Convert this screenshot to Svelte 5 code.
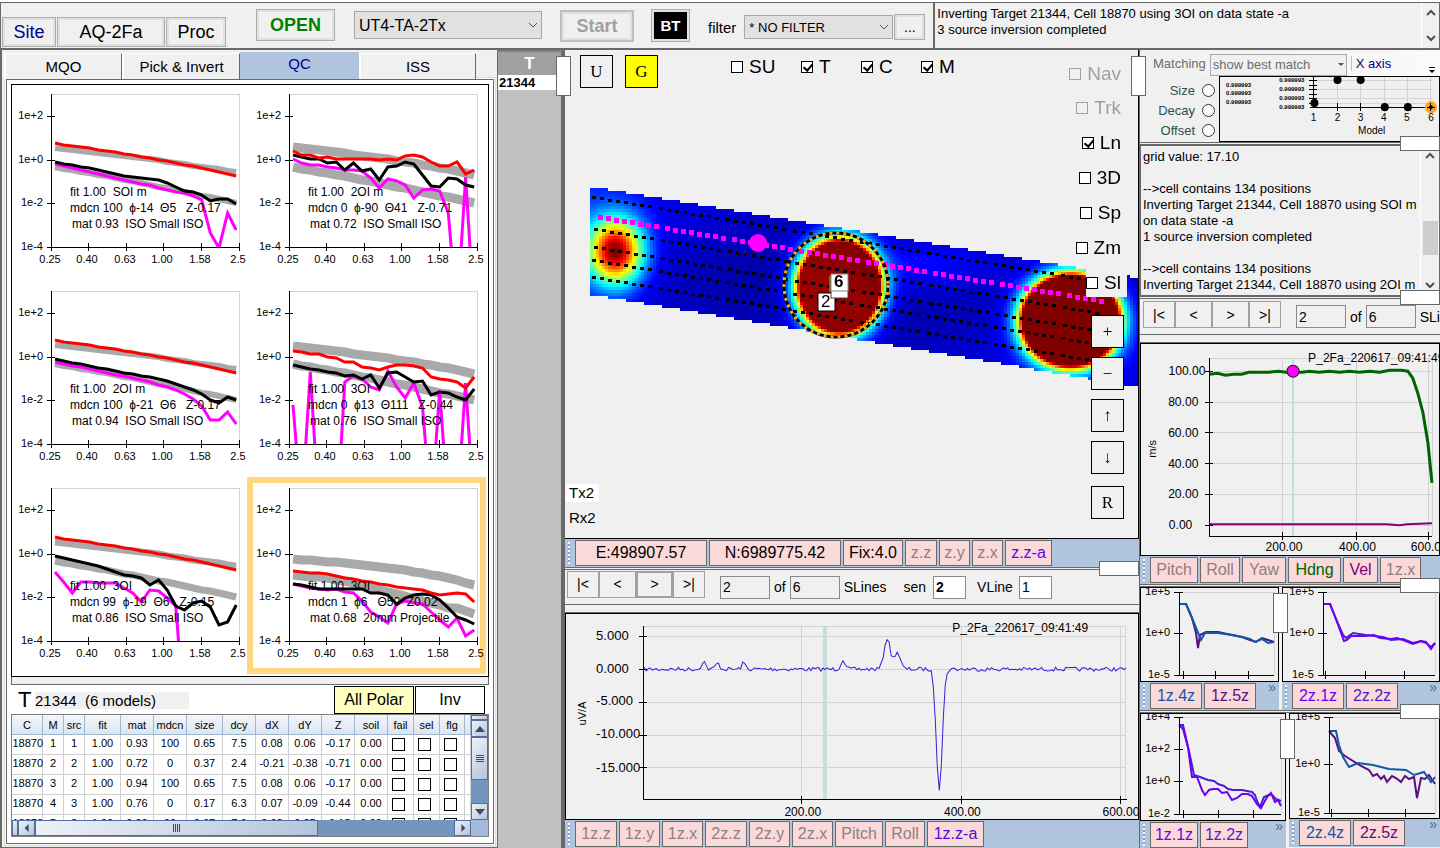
<script lang="ts">
  type Chip = { text: string; color?: string; width: number };
  type Decay = {
    label: string[];
    red: number[];
    black: number[];
    pink: number[];
    upper: number[];
    lower: number[];
    band: number;
  };

  let tab = $state("QC");
  let selected = $state(5);
  let heat: HTMLCanvasElement;

  const tabs = ["MQO", "Pick & Invert", "QC", "ISS"];

  const upperA = [63, 64, 65, 66, 67, 68, 69, 70, 71, 72, 73, 74, 75, 77, 78, 79, 81, 82, 83, 84, 86, 87];
  const lowerA = [82, 84, 85, 87, 88, 90, 91, 93, 95, 96, 98, 100, 102, 103, 105, 107, 109, 111, 112, 114, 116, 118];
  const upperB = [62, 63, 64, 65, 66, 67, 68, 70, 71, 72, 73, 74, 76, 77, 78, 80, 81, 83, 84, 86, 88, 90];
  const redA = [58, 60, 61, 62, 63, 65, 66, 67, 69, 70, 72, 73, 75, 76, 78, 80, 81, 83, 85, 87, 89, 91];

  const plots: Decay[] = [
    {
      label: ["fit 1.00  SOI m", "mdcn 100  ϕ-14  Θ5   Z-0.17", "mat 0.93  ISO Small ISO"],
      red: redA,
      black: [77, 79, 80, 82, 83, 85, 87, 89, 91, 92, 93, 94, 95, 98, 102, 106, 107, 110, 116, 114, 114, 119],
      pink: [79, 81, 83, 85, 87, 89, 91, 93, 95, 97, 99, 100, 103, 105, 107, 108, 111, 115, 148, 163, 128, 145],
      upper: upperA,
      lower: lowerA,
      band: 6
    },
    {
      label: ["fit 1.00  2OI m", "mdcn 0  ϕ-90  Θ41   Z-0.71", "mat 0.72  ISO Small ISO"],
      red: [66, 70, 70, 73, 72, 74, 74, 74, 74, 74, 75, 74, 75, 71, 70, 72, 77, 81, 81, 77, 89, 85],
      black: [70, 72, 74, 74, 78, 77, 85, 78, 86, 84, 95, 82, 81, 77, 79, 90, 101, 102, 93, 94, 100, 102],
      pink: [74, 78, 80, 80, 82, 83, 85, 85, 86, 93, 103, 94, 96, 100, 113, 105, 104, 106, 128, 230, 92, 230],
      upper: upperB,
      lower: lowerA,
      band: 9
    },
    {
      label: ["fit 1.00  2OI m", "mdcn 100  ϕ-21  Θ6   Z-0.17", "mat 0.94  ISO Small ISO"],
      red: redA,
      black: [77, 79, 81, 82, 84, 86, 87, 89, 91, 92, 94, 95, 97, 99, 102, 105, 108, 112, 118, 121, 115, 118],
      pink: [80, 82, 84, 85, 87, 89, 91, 93, 94, 96, 98, 100, 103, 105, 108, 112, 117, 124, 138, 138, 130, 142],
      upper: upperA,
      lower: lowerA,
      band: 6
    },
    {
      label: ["fit 1.00  3OI", "mdcn 0  ϕ13  Θ111   Z-0.44", "mat 0.76  ISO Small ISO"],
      red: [69, 70, 72, 72, 75, 76, 80, 80, 85, 86, 88, 85, 83, 83, 84, 86, 95, 97, 98, 100, 106, 95],
      black: [83, 85, 87, 88, 90, 91, 94, 93, 97, 93, 106, 91, 90, 95, 100, 99, 113, 110, 111, 115, 118, 107],
      pink: [123, 228, 90, 228, 228, 248, 100, 94, 97, 105, 108, 89, 105, 116, 101, 125, 230, 108, 230, 230, 101, 230],
      upper: upperB.map((y) => y + 2),
      lower: lowerA,
      band: 9
    },
    {
      label: ["fit 1.00  3OI", "mdcn 99  ϕ-19  Θ6   Z-0.15", "mat 0.86  ISO Small ISO"],
      red: redA,
      black: [77, 79, 81, 83, 85, 87, 90, 93, 96, 97, 99, 106, 101, 111, 127, 131, 124, 122, 128, 146, 143, 126],
      pink: [93, 103, 114, 103, 103, 104, 104, 104, 109, 114, 123, 111, 112, 119, 127, 240],
      upper: upperA,
      lower: lowerA,
      band: 7
    },
    {
      label: ["fit 1.00  3OI", "mdcn 1  ϕ6   Θ50  Z0.02", "mat 0.68  20mm Projectile"],
      red: [92, 93, 94, 94, 95, 97, 99, 100, 102, 103, 105, 106, 108, 109, 110, 111, 114, 116, 115, 114, 115, 123],
      black: [105, 106, 108, 110, 110, 110, 110, 110, 110, 114, 114, 116, 125, 119, 116, 115, 116, 121, 129, 138, 141, 145],
      pink: [105, 107, 109, 110, 111, 110, 113, 114, 122, 133, 138, 144, 125, 122, 124, 125, 133, 141, 148, 139, 157, 151],
      upper: [80, 81, 81, 82, 83, 83, 84, 85, 86, 87, 88, 89, 90, 91, 93, 94, 96, 97, 99, 101, 104, 106],
      lower: [96, 97, 98, 98, 99, 101, 102, 104, 106, 109, 111, 113, 115, 117, 120, 122, 124, 126, 129, 129, 132, 135],
      band: 9
    }
  ];

  const decayY = [["1e+2", 31], ["1e+0", 75], ["1e-2", 118], ["1e-4", 162]] as const;
  const decayX = [["0.25", 39], ["0.40", 76], ["0.63", 114], ["1.00", 151], ["1.58", 189], ["2.5", 227]] as const;

  const line = (ys: number[]) => ys.map((y, i) => `${(43 + i * 8.63).toFixed(1)},${y}`).join(" ");

  const columns = [
    ["C", 31], ["M", 21], ["src", 21], ["fit", 36], ["mat", 33], ["mdcn", 33], ["size", 36], ["dcy", 33],
    ["dX", 33], ["dY", 33], ["Z", 33], ["soil", 33], ["fail", 26], ["sel", 26], ["flg", 25]
  ] as const;

  const rows = [
    ["18870", "1", "1", "1.00", "0.93", "100", "0.65", "7.5", "0.08", "0.06", "-0.17", "0.00"],
    ["18870", "2", "2", "1.00", "0.72", "0", "0.37", "2.4", "-0.21", "-0.38", "-0.71", "0.00"],
    ["18870", "3", "2", "1.00", "0.94", "100", "0.65", "7.5", "0.08", "0.06", "-0.17", "0.00"],
    ["18870", "4", "3", "1.00", "0.76", "0", "0.17", "6.3", "0.07", "-0.09", "-0.44", "0.00"],
    ["18870", "5", "3", "1.00", "0.86", "99", "0.67", "7.6", "0.08", "0.05", "-0.15", "0.00"]
  ];

  const topLog = ["Inverting Target 21344, Cell 18870 using 3OI on data state -a", "3 source inversion completed"];
  const log = [
    "grid value: 17.10",
    "",
    "-->cell contains 134 positions",
    "Inverting Target 21344, Cell 18870 using SOI m",
    "on data state -a",
    "1 source inversion completed",
    "",
    "-->cell contains 134 positions",
    "Inverting Target 21344, Cell 18870 using 2OI m"
  ];

  const layers = [["SU", false], ["T", true], ["C", true], ["M", true]] as const;
  const views = [
    ["Nav", false, true], ["Trk", false, true], ["Ln", true, false], ["3D", false, false],
    ["Sp", false, false], ["Zm", false, false], ["Sl", false, false]
  ] as const;

  const positionChips: Chip[] = [
    { text: "E:498907.57", color: "#000", width: 132 },
    { text: "N:6989775.42", color: "#000", width: 132 },
    { text: "Fix:4.0", color: "#000", width: 60 },
    { text: "z.z", width: 32 },
    { text: "z.y", width: 31 },
    { text: "z.x", width: 31 },
    { text: "z.z-a", color: "#6a00f4", width: 47 }
  ];
  const channelChips: Chip[] = [
    { text: "1z.z", width: 42 },
    { text: "1z.y", width: 41 },
    { text: "1z.x", width: 41 },
    { text: "2z.z", width: 42 },
    { text: "2z.y", width: 41 },
    { text: "2z.x", width: 41 },
    { text: "Pitch", width: 48 },
    { text: "Roll", width: 40 },
    { text: "1z.z-a", color: "#4a0fe0", width: 57 }
  ];
  const motionChips: Chip[] = [
    { text: "Pitch", width: 48 },
    { text: "Roll", width: 40 },
    { text: "Yaw", width: 44 },
    { text: "Hdng", color: "#006400", width: 53 },
    { text: "Vel", color: "#800080", width: 35 },
    { text: "1z.x", width: 41 }
  ];

  const smallPlots = [
    {
      w: 139, h: 95, right: 134, axis: 39, bottom: 88,
      ys: [["1e+5", 5], ["1e+0", 46], ["1e-5", 88]],
      xs: [43, 75, 108],
      lines: [
        ["#5a1080", "39,17 46,17 52,31 56,46 58,61 60,48 66,45 78,45 92,48 102,50 110,53 116,55 122,51 128,53 134,55"],
        ["#1058a8", "39,17 46,17 50,26 61,53 65,46 78,46 92,48 102,50 110,52 115,55 122,52 128,56 134,55"]
      ],
      chips: [{ text: "1z.4z", color: "#1058a8", width: 52 }, { text: "1z.5z", color: "#5a1080", width: 52 }],
      handle: true
    },
    {
      w: 158, h: 95, right: 153, axis: 41, bottom: 88,
      ys: [["1e+5", 5], ["1e+0", 46], ["1e-5", 88]],
      xs: [43, 83, 122],
      lines: [
        ["#4b1fd0", "41,17 48,17 54,32 61,48 64,51 71,46 84,48 101,50 109,53 121,52 131,56 139,54 144,56 149,60 153,56"],
        ["#6a00f4", "41,17 48,17 54,32 62,54 65,53 69,49 84,49 92,48 98,51 109,52 115,51 121,53 131,57 139,54 144,55 149,62 153,56"]
      ],
      chips: [{ text: "2z.1z", color: "#6a00f4", width: 52 }, { text: "2z.2z", color: "#4b1fd0", width: 52 }],
      handle: false
    },
    {
      w: 146, h: 108, right: 141, axis: 39, bottom: 101,
      ys: [["1e+4", 4], ["1e+2", 36], ["1e+0", 68], ["1e-2", 101]],
      xs: [43, 78, 113],
      lines: [
        ["#4b1fd0", "39,12 43,16 49,38 54,62 60,64 68,67 74,68 78,71 84,73 88,76 93,77 102,77 112,79 115,82 117,88 120,94 124,84 131,81 136,86 141,88"],
        ["#6a00f4", "39,12 43,12 48,34 52,64 57,64 62,77 65,82 69,77 73,76 78,76 82,80 87,79 92,87 97,85 102,81 108,81 112,83 117,91 121,95 127,84 131,80 135,89 138,87 141,93"]
      ],
      chips: [{ text: "1z.1z", color: "#6a00f4", width: 48 }, { text: "1z.2z", color: "#4b1fd0", width: 48 }],
      handle: true
    },
    {
      w: 151, h: 106, right: 146, axis: 40, bottom: 100,
      ys: [["1e+5", 4], ["1e+0", 51], ["1e-5", 100]],
      xs: [42, 79, 116],
      lines: [
        ["#5a1080", "40,18 46,25 50,38 56,43 64,48 72,53 80,57 84,63 88,61 92,66 95,63 98,69 103,63 107,65 112,69 116,63 120,66 125,64 128,85 132,65 136,66 140,62 146,71"],
        ["#1058a8", "40,18 47,18 50,32 54,44 60,54 69,50 84,52 100,56 117,57 125,62 135,59 142,69 146,64"]
      ],
      chips: [{ text: "2z.4z", color: "#1058a8", width: 52 }, { text: "2z.5z", color: "#5a1080", width: 52 }],
      handle: false
    }
  ];

  // response trace: background noise plus the lobes over the target
  function trace() {
    const lobes = [
      [138, -8, 2], [152, -6, 2], [178, -6, 2], [277, -10, 2], [321, -31, 3], [331, -17, 3], [373, 119, 3]
    ];
    let seed = 7;
    const pts: string[] = [];
    for (let x = 79; x < 560; x += 2) {
      seed = (seed * 16807) % 2147483647;
      let y = 56 + ((seed / 2147483647) - 0.5) * 4;
      for (const [c, a, w] of lobes) y += a * Math.exp(-((x - c) ** 2) / (2 * w * w));
      pts.push(`${x},${y.toFixed(1)}`);
    }
    return pts.join(" ");
  }

  function dots(x0: number, y0: number, x1: number) {
    const out: [number, number][] = [];
    let n = 0;
    for (let x = x0; x < x1; x += n % 8 === 0 ? 11 : 8) {
      out.push([x, Math.round(y0 + (x - x0) * 0.167)]);
      n++;
    }
    return out;
  }

  const tracks = [dots(2, 8, 500), dots(4, 40, 512), dots(4, 58, 500), dots(2, 71, 496), dots(2, 88, 500)];
  const activeTrack = dots(8, 27, 514);

  const jet = (v: number) =>
    [3, 2, 1].map((k) => Math.round(255 * Math.min(1, Math.max(0, 1.5 - Math.abs(4 * v - k)))));

  function field(x: number, y: number) {
    let v = 0.06 + 0.02 * Math.sin(x / 70 + 1) + 0.02 * Math.cos(y / 30);
    v += 0.09 * Math.exp(-((x - 340) ** 2) / 4000 - ((y - 75) ** 2) / 900);
    v += 0.06 * Math.exp(-x / 40);
    v += 0.9 * Math.exp(-((x - 24) ** 2) / 720 - ((y - 62) ** 2) / 1050);
    for (const [cx, cy, rx, ry] of [[248, 97, 40, 45], [479, 131, 48, 45]]) {
      const d = (Math.hypot((x - cx) / rx, (y - cy) / ry) - 1) * rx;
      v += 0.95 * Math.exp(-Math.max(0, d) / 8);
    }
    return Math.min(1, v);
  }

  $effect(() => {
    const ctx = heat.getContext("2d");
    if (!ctx) return;
    for (let i = 0; i < heat.width; i++) {
      const top = Math.floor((i * 0.5) / 3);
      const bottom = 35 + Math.floor((i * 0.507) / 3);
      for (let j = top; j <= bottom; j++) {
        const [r, g, b] = jet(field(i * 3, j * 3));
        ctx.fillStyle = `rgb(${r},${g},${b})`;
        ctx.fillRect(i, j, 1, 1);
      }
    }
  });
</script>

{#snippet chevron(dir: "up" | "down")}
  <svg class="chevron" viewBox="0 0 10 8" aria-hidden="true">
    <path d={dir === "up" ? "M1 6 5 2 9 6" : "M1 2 5 6 9 2"} />
  </svg>
{/snippet}

{#snippet chips(items: Chip[], more = false)}
  <div class="toolbar">
    <span class="grip"></span>
    {#each items as chip}
      <button style="width: {chip.width}px; color: {chip.color ?? '#8c8084'}">{chip.text}</button>
    {/each}
    {#if more}<span class="more">»</span>{/if}
  </div>
{/snippet}

{#snippet stepper(id: string)}
  <div class="steps">
    <button>|&lt;</button><button>&lt;</button><button class:focus={id === "mid"}>&gt;</button><button>&gt;|</button>
  </div>
  <input class="count" id="{id}-line" aria-label="Line" value="2" />
  <label for="{id}-total">of</label>
  <input class="count" id="{id}-total" value="6" />
  <span class="unit">SLines</span>
{/snippet}

<div class="app">
  <header>
    <div class="site">
      <button class="navy">Site</button>
      <button class="wide">AQ-2Fa</button>
      <button>Proc</button>
    </div>
    <button class="open">OPEN</button>
    <div class="select system">
      <select aria-label="System"><option>UT4-TA-2Tx</option></select>
      {@render chevron("down")}
    </div>
    <button class="start" disabled>Start</button>
    <button class="bt">BT</button>
    <label class="filter-label" for="filter">filter</label>
    <div class="select filter">
      <select id="filter"><option>* NO FILTER</option></select>
      {@render chevron("down")}
    </div>
    <button class="dots">...</button>
    <div class="log top-log" role="log">
      <div class="lines">
        {#each topLog as text}<p>{text}</p>{/each}
      </div>
      <div class="scroll">{@render chevron("up")}{@render chevron("down")}</div>
    </div>
  </header>

  <main>
    <section class="models">
      <div class="tabs">
        {#each tabs as name}
          <button class:active={tab === name} onclick={() => (tab = name)}>{name}</button>
        {/each}
      </div>
      <div class="sheet">
        <div class="plots">
          {#each plots as plot, i}
            <!-- svelte-ignore a11y_click_events_have_key_events, a11y_no_static_element_interactions -->
            <svg viewBox="0 0 238 197" onclick={() => (selected = i)}>
              <clipPath id="clip{i}"><rect x="39" y="9" width="189" height="153" /></clipPath>
              {#if selected === i}
                <rect x="0" y="1" width="233" height="191" fill="none" stroke="#ffd780" stroke-width="6" />
              {/if}
              <path d="M39 9H227V162" class="frame" />
              <g clip-path="url(#clip{i})" fill="none">
                <polyline points={line(plot.upper)} stroke="#a9a9a9" stroke-width={plot.band} />
                <polyline points={line(plot.lower)} stroke="#a9a9a9" stroke-width={plot.band} />
                <polyline points={line(plot.pink)} stroke="#f0f" stroke-width="3" />
                <polyline points={line(plot.black)} stroke="#000" stroke-width="3" />
                <polyline points={line(plot.red)} stroke="#f00" stroke-width="3" />
              </g>
              <path d="M39 9V162H227" class="axis" />
              {#each decayY as [label, y]}
                <path d="M35 {y}H43" class="axis" />
                <text x="31" y={y + 3} text-anchor="end" class="tick">{label}</text>
              {/each}
              {#each decayX as [label, x]}
                <path d="M{x} 158V166" class="axis" />
                <text x={x - 1} y="178" text-anchor="middle" class="tick">{label}</text>
              {/each}
              {#each plot.label as text, k}
                <text x={k === 2 ? 60 : 58} y={111 + k * 16} class="note">{text}</text>
              {/each}
            </svg>
          {/each}
        </div>
        <div class="splitter"></div>
        <div class="summary">
          <b>T</b>
          <span>21344&nbsp; (6 models)</span>
          <button class="polar">All Polar</button>
          <button class="inv">Inv</button>
        </div>
        <div class="grid">
          <div class="viewport">
            <table>
              <colgroup>
                {#each columns as [, width]}<col style="width: {width}px" />{/each}
                <col />
              </colgroup>
              <thead>
                <tr>{#each columns as [name]}<th>{name}</th>{/each}<th></th></tr>
              </thead>
              <tbody>
                {#each rows as row}
                  <tr>
                    {#each row as cell}<td>{cell}</td>{/each}
                    {#each ["fail", "sel", "flg"] as flag}
                      <td><input type="checkbox" aria-label="{flag} model {row[1]}" /></td>
                    {/each}
                    <td></td>
                  </tr>
                {/each}
              </tbody>
            </table>
          </div>
          <div class="vbar">
            <i class="cap"></i>
            <i class="arrow">
              <svg viewBox="0 0 10 6"><path d="M0 6 5 0 10 6Z" /></svg>
            </i>
            <i class="thumb"><svg viewBox="0 0 8 8"><path d="M0 0H8V1H0ZM0 2H8V3H0ZM0 4H8V5H0ZM0 6H8V7H0Z" /></svg></i>
            <i class="arrow last">
              <svg viewBox="0 0 10 6"><path d="M0 0 5 6 10 0Z" /></svg>
            </i>
          </div>
          <div class="hbar">
            <i class="cap"></i>
            <i class="arrow"><svg viewBox="0 0 10 10"><path d="M7 0 2 5 7 10Z" /></svg></i>
            <i class="thumb"><svg viewBox="0 0 8 8"><path d="M0 0V8H1V0ZM2 0V8H3V0ZM4 0V8H5V0ZM6 0V8H7V0Z" /></svg></i>
            <i class="arrow last"><svg viewBox="0 0 10 10"><path d="M3 0 8 5 3 10Z" /></svg></i>
          </div>
          <div class="corner"></div>
        </div>
      </div>
    </section>

    <aside class="targets">
      <h2>T</h2>
      <p>21344</p>
    </aside>

    <section class="centre">
      <span class="handle tall"></span>
      <div class="map">
        <div class="survey">
          <canvas bind:this={heat} width="183" height="66"></canvas>
          <svg viewBox="0 0 549 198">
            {#each tracks as track}
              {#each track as [x, y]}<rect {x} {y} width="4" height="3" />{/each}
            {/each}
            {#each activeTrack as [x, y]}<rect {x} {y} width="5" height="5" fill="#f0f" />{/each}
            <circle cx="168" cy="55" r="9" fill="#f0f" />
            <circle cx="246" cy="97" r="52" fill="none" stroke="#000" stroke-width="3" />
            <circle cx="246" cy="97" r="52" fill="none" stroke="#ffa51f" stroke-width="3" stroke-dasharray="3 4" />
            <rect x="228" y="105" width="17" height="18" fill="#fff" stroke="#000" />
            <text x="231" y="119" class="pin">2</text>
            <rect x="239" y="88" width="8" height="16" fill="#8a7000" />
            <rect x="241" y="93" width="17" height="17" fill="#fff" stroke="#444" />
            <rect x="241" y="86" width="17" height="17" fill="#fff" stroke="#888" />
            <text x="244" y="99" class="pin bold">6</text>
          </svg>
        </div>
        <div class="modes">
          <button>U</button>
          <button class="on">G</button>
        </div>
        <div class="layers">
          {#each layers as [name, checked]}
            <label><input type="checkbox" {checked} />{name}</label>
          {/each}
        </div>
        <div class="views">
          {#each views as [name, checked, disabled]}
            <label class:disabled><input type="checkbox" {checked} {disabled} />{name}</label>
          {/each}
        </div>
        <div class="zoom">
          {#each ["+", "−", "↑", "↓", "R"] as name}<button>{name}</button>{/each}
        </div>
        <div class="coils"><span class="tx">Tx2</span><span>Rx2</span></div>
      </div>
      {@render chips(positionChips)}
      <div class="seam"><span class="handle flat"></span></div>
      <div class="stepper">
        {@render stepper("mid")}
        <label class="sen" for="sen">sen</label>
        <input class="short bold" id="sen" value="2" />
        <label class="vline" for="vline">VLine</label>
        <input class="short" id="vline" value="1" />
      </div>
      <div class="band"></div>
      <svg class="chart" viewBox="0 0 572 206">
        <path class="gridline" d="M78 13H559V186M78 23H559M78 56H559M78 89H559M78 122H559M78 154H559M236 13V186M395 13V186M554 13V186" />
        <path d="M259 13V186" stroke="#c3dfdd" stroke-width="4" />
        <polyline points={trace()} fill="none" stroke="#4418d8" />
        <path class="axis" d="M78 13V186H560M74 23H82M74 56H82M74 89H82M74 122H82M74 154H82M236 182V190M395 182V190M554 182V190" />
        {#each [["5.000", 23], ["0.000", 56], ["-5.000", 88], ["-10.000", 121], ["-15.000", 154]] as const as [label, y]}
          <text x="31" y={y + 4} class="value">{label}</text>
        {/each}
        <text x="237" y="202" text-anchor="middle" class="note">200.00</text>
        <text x="396" y="202" text-anchor="middle" class="note">400.00</text>
        <text x="554" y="202" text-anchor="middle" class="note">600.00</text>
        <text x="386" y="19" class="note">P_2Fa_220617_09:41:49</text>
        <text transform="translate(21 112) rotate(-90)" class="small">uV/A</text>
      </svg>
      {@render chips(channelChips)}
    </section>

    <section class="right">
      <span class="handle tall"></span>
      <div class="matching">
        <label for="match">Matching</label>
        <div class="select">
          <select id="match"><option>show best match</option></select>
          <svg class="caret" viewBox="0 0 6 4" aria-hidden="true"><path d="M0 0H6L3 3Z" /></svg>
        </div>
        <button>X axis</button>
        <svg class="overflow" viewBox="0 0 8 8" aria-hidden="true"><path d="M1 0H7V1H1ZM1 3H7L4 6Z" /></svg>
      </div>
      <div class="match-row">
        <div class="radios">
          {#each ["Size", "Decay", "Offset"] as name}
            <label>{name}<input type="radio" name="match-axis" /></label>
          {/each}
        </div>
        <svg viewBox="0 0 220 66">
          <path class="gridline" d="M94 4H213M94 13H213M94 22H213M94 27H213M118 0V31M141 0V31M165 0V31M188 0V31M211 0V31" />
          <path class="axis" d="M94 0V31M91 31H212M90 4H98M90 9H98M90 13H98M90 18H98M90 22H98M90 27H98M118 27V35M141 27V35M165 27V35M188 27V35" />
          {#each [9, 17, 26] as y}<text x="7" y={y + 2} class="tiny">0.999993</text>{/each}
          {#each [4, 13, 22, 31] as y}<text x="60" y={y + 2} class="tiny">0.999993</text>{/each}
          <circle cx="211" cy="31" r="6" fill="#ffa51f" />
          <path class="axis" d="M207 31H215M211 27V35" />
          {#each [[95, 27], [118, 4], [141, 4], [165, 31], [188, 31]] as [x, y]}<circle cx={x} cy={y} r="4" />{/each}
          <circle cx="211" cy="31" r="2" />
          {#each [94, 118, 141, 164, 187, 211] as x, i}<text {x} y="45" text-anchor="middle" class="mini">{i + 1}</text>{/each}
          <text x="152" y="58" text-anchor="middle" class="mini">Model</text>
        </svg>
      </div>
      <div class="seam"><span class="handle flat"></span></div>
      <div class="log side-log" role="log">
        <div class="lines">
          {#each log as text}<p>{text}</p>{/each}
        </div>
        <div class="scroll">{@render chevron("up")}<i></i>{@render chevron("down")}</div>
      </div>
      <div class="seam"><span class="handle flat"></span></div>
      <div class="stepper">{@render stepper("side")}</div>
      <div class="band"></div>
      <svg class="chart heading" viewBox="0 0 298 212">
        <path class="gridline" d="M69 15H291V192M69 28H291M69 59H291M69 89H291M69 120H291M69 150H291M69 181H291M142 15V192M215 15V192M287 15V192" />
        <path d="M152 15V192" stroke="#c3dfdd" stroke-width="2" />
        <polyline fill="none" stroke="#006400" stroke-width="3" points="69,31 77,30 85,32 93,31 101,31 108,29 128,29 138,28 145,29 161,29 168,28 178,29 188,28 198,29 208,28 218,29 228,28 238,29 248,27 260,27 266,28 271,35 276,50 281,69 286,99 290,139" />
        <polyline fill="none" stroke="#800080" stroke-width="2" points="69,180 245,180 258,181 265,180 290,179" />
        <path class="axis" d="M69 15V192H290M65 28H73M65 59H73M65 89H73M65 120H73M65 150H73M65 181H73M142 188V196M215 188V196M287 188V196" />
        {#each [["100.00", 28, 65], ["80.00", 59, 58], ["60.00", 89, 58], ["40.00", 120, 58], ["20.00", 150, 58], ["0.00", 181, 52]] as const as [label, y, x]}
          <text {x} y={y + 4} text-anchor="end" class="note">{label}</text>
        {/each}
        <text x="143" y="207" text-anchor="middle" class="note">200.00</text>
        <text x="216" y="207" text-anchor="middle" class="note">400.00</text>
        <text x="269" y="207" class="note">600.00</text>
        <circle cx="152" cy="28" r="6" fill="#f0f" stroke="#222" />
        <text x="167" y="19" class="note">P_2Fa_220617_09:41:49</text>
        <text transform="translate(16 114) rotate(-90)" class="small">m/s</text>
      </svg>
      {@render chips(motionChips)}
      {#each [smallPlots.slice(0, 2), smallPlots.slice(2)] as pair, r}
        <div class="seam"><span class="handle flat"></span></div>
        <div class="pair" class:second={r === 1}>
          {#each pair as p}
            <div class="cell">
              <svg class="chart boxed" viewBox="0 0 {p.w} {p.h}">
                <path class="gridline" d="M{p.axis} {p.ys[0][1]}H{p.right}V{p.bottom}" />
                {#each p.lines as [color, points]}
                  <polyline {points} fill="none" stroke={color} stroke-width="2" />
                {/each}
                <path class="axis" d="M{p.axis} {p.ys[0][1]}V{p.bottom}H{p.right}" />
                {#each p.xs as x}<path class="axis" d="M{x} {p.bottom - 4}v8" />{/each}
                {#each p.ys as [label, y]}
                  <path class="axis" d="M{p.axis - 5} {y}h9" />
                  <text x={p.axis - 9} y={Number(y) + 3} text-anchor="end" class="tick">{label}</text>
                {/each}
              </svg>
              {@render chips(p.chips, true)}
              {#if p.handle}<span class="handle tall"></span>{/if}
            </div>
          {/each}
        </div>
      {/each}
    </section>
  </main>
</div>

<style>
  :global(body) {
    margin: 0;
    background: #f0f0f0;
  }

  .app {
    display: flex;
    flex-direction: column;
    min-height: 100vh;
    overflow: hidden;
    font-family: "Liberation Sans", Arial, sans-serif;
    font-size: 14px;
    color: #000;
    background: #f0f0f0;
  }

  .app * {
    box-sizing: border-box;
  }

  button,
  input,
  select {
    margin: 0;
    padding: 0;
    font: inherit;
    color: inherit;
    background: #f0f0f0;
    border: 1px solid #8a8a8a;
    border-radius: 0;
  }

  p,
  h2 {
    margin: 0;
  }

  svg {
    display: block;
  }

  select {
    width: 100%;
    height: 100%;
    padding-left: 4px;
    appearance: none;
    background: #e1e1e1;
    border-color: #a8a8a8;
  }

  input[type="checkbox"] {
    appearance: none;
    flex: none;
    width: 12px;
    height: 12px;
    background: #fff;
    border: 1px solid #000;
  }

  input[type="checkbox"]:checked::after {
    content: "";
    display: block;
    width: 4px;
    height: 7px;
    margin: 0 0 0 3px;
    border: solid #000;
    border-width: 0 2px 2px 0;
    transform: rotate(40deg);
  }

  .chevron {
    width: 10px;
    height: 8px;
    fill: none;
    stroke: #505050;
  }

  .select {
    position: relative;
  }

  .select .chevron {
    position: absolute;
    right: 4px;
    top: calc(50% - 4px);
    pointer-events: none;
  }

  .handle {
    position: absolute;
    z-index: 5;
    background: #fff;
    border: 1px solid #696969;
  }

  .handle.tall {
    top: 6px;
    left: -9px;
    width: 15px;
    height: 40px;
  }

  .handle.flat {
    top: -7px;
    right: 0;
    width: 40px;
    height: 15px;
  }

  /* header */
  header {
    display: flex;
    align-items: flex-start;
    height: 50px;
    border-top: 2px solid #fff;
    border-bottom: 2px solid #696969;
    box-shadow: inset 0 1px #696969, inset 1px 0 #696969;
  }

  header button {
    flex: none;
    border: 1px solid #adadad;
    box-shadow: inset 0 0 0 2px #e1e1e1;
  }

  .site {
    display: flex;
    gap: 1px;
    margin: 15px 30px 0 2px;
    font-size: 18px;
  }

  .site button {
    width: 60px;
    height: 30px;
  }

  .site .navy {
    width: 54px;
    color: #00008b;
  }

  .site .wide {
    width: 108px;
  }

  .open {
    width: 79px;
    height: 32px;
    margin: 7px 19px 0 0;
    font-size: 18px;
    font-weight: bold;
    color: #008000;
  }

  .system {
    width: 188px;
    height: 28px;
    margin: 9px 18px 0 0;
    font-size: 16px;
  }

  header .start {
    width: 74px;
    height: 32px;
    margin: 8px 17px 0 0;
    font-size: 18px;
    font-weight: bold;
    color: #a0a0a0;
    border: 2px solid #bfbfbf;
  }

  header .bt {
    width: 39px;
    height: 33px;
    margin: 7px 18px 0 0;
    font-size: 15px;
    font-weight: bold;
    color: #fff;
    background: #000;
    box-shadow: inset 0 0 0 2px #e1e1e1;
  }

  .filter-label {
    margin: 17px 8px 0 0;
    font-size: 15px;
  }

  .filter {
    width: 149px;
    height: 24px;
    margin: 13px 1px 0 0;
    font-size: 13px;
  }

  .dots {
    width: 31px;
    height: 26px;
    margin: 12px 8px 0 0;
  }

  .log {
    display: flex;
    overflow: hidden;
    border: 1px solid #696969;
    font-size: 13px;
    line-height: 16px;
  }

  .lines {
    flex: 1;
    min-width: 0;
    overflow: hidden;
    padding: 3px 0 0 2px;
    white-space: pre;
  }

  .lines p {
    height: 16px;
  }

  .top-log {
    flex: 1;
    height: 46px;
    border-width: 1px 1px 0 2px;
  }

  .scroll {
    display: flex;
    flex-direction: column;
    justify-content: space-between;
    align-items: center;
    width: 18px;
    padding: 6px 0;
    border-left: 1px solid #fff;
  }

  .top-log .chevron,
  .side-log .chevron {
    stroke-width: 2;
  }

  /* page columns */
  main {
    display: grid;
    flex: 1;
    grid-template-columns: 497fr 67fr 575fr 301fr;
  }

  main > * {
    min-width: 0;
  }

  .models {
    padding: 2px 3px 3px 2px;
    border-left: 2px solid #696969;
    border-bottom: 2px solid #696969;
  }

  .tabs {
    display: grid;
    grid-template-columns: 118fr 118fr 119fr 117fr;
    width: calc(100% - 18px);
    height: 27px;
  }

  .tabs button {
    font-size: 15px;
    border: 0;
    border-top: 1px solid #fff;
    border-left: 2px solid #fff;
    border-right: 1px solid #696969;
    margin-top: 1px;
  }

  .tabs .active {
    margin: 0;
    padding-bottom: 5px;
    color: #00008b;
    background: #b0c4de;
    border: 0;
  }

  .sheet {
    margin-left: 2px;
    padding: 4px;
    background: #fff;
    border: 1px solid #696969;
    box-shadow: 0 0 0 1px #fff, 0 0 0 2px #dcdcdc;
  }

  .plots {
    display: grid;
    grid-template-columns: 1fr 1fr;
    border: 1px solid #000;
  }

  .plots svg {
    width: 100%;
    overflow: visible;
  }

  .axis {
    fill: none;
    stroke: #000;
    shape-rendering: crispEdges;
  }

  .frame,
  .gridline {
    fill: none;
    stroke: #d3d3d3;
    shape-rendering: crispEdges;
  }

  .tick,
  .small {
    font-size: 11px;
  }

  .note {
    font-size: 12px;
    white-space: pre;
  }

  .value {
    font-size: 13px;
  }

  .tiny {
    font-size: 6px;
    font-weight: bold;
  }

  .mini {
    font-size: 10px;
  }

  .pin {
    font-size: 17px;
  }

  .pin.bold {
    font-weight: bold;
  }

  .splitter {
    height: 8px;
    background: #f0f0f0;
    border: 1px solid #696969;
    border-top: 0;
  }

  .summary {
    display: flex;
    align-items: center;
    gap: 1px;
    height: 29px;
    padding: 1px 4px 0 7px;
    font-size: 15px;
  }

  .summary b {
    width: 16px;
    font-size: 22px;
    font-weight: normal;
  }

  .summary span {
    width: 154px;
    margin-right: auto;
    line-height: 17px;
    background: #f0f0f0;
  }

  .summary button {
    height: 28px;
    font-size: 16px;
    background: #fff;
    border-color: #000;
  }

  .summary .polar {
    width: 80px;
    background: #ffffc0;
  }

  .summary .inv {
    width: 70px;
  }

  .grid {
    display: grid;
    grid-template-columns: 1fr 17px;
    grid-template-rows: 105px 16px;
    margin-bottom: 2px;
    border: 1px solid #808080;
    overflow: hidden;
  }

  .viewport {
    overflow: hidden;
  }

  table {
    width: 100%;
    table-layout: fixed;
    border-collapse: separate;
    border-spacing: 0;
    font-size: 11px;
  }

  th,
  td {
    padding: 0;
    height: 20px;
    overflow: visible;
    text-align: center;
    white-space: nowrap;
    border-right: 1px solid #d0d0d0;
    border-bottom: 1px solid #d0d0d0;
  }

  th {
    font-weight: normal;
    background: linear-gradient(#f3f6fa, #dbe5f0);
    border-color: #9eb6d0;
  }

  td {
    padding-bottom: 4px;
  }

  td:first-child {
    direction: rtl;
    text-align: left;
  }

  td:nth-child(n + 13) {
    padding: 0;
  }

  td input[type="checkbox"] {
    display: block;
    width: 13px;
    height: 13px;
    margin: 0 0 0 4px;
  }

  .vbar,
  .hbar {
    display: flex;
    background: #7396bf;
  }

  .vbar {
    flex-direction: column;
  }

  .grid i {
    display: flex;
    align-items: center;
    justify-content: center;
    background: linear-gradient(135deg, #eef2f8, #b4c4dc);
    border: 1px solid #4f6f9f;
  }

  .grid i svg {
    width: 10px;
    height: 8px;
    fill: #3c4a66;
  }

  .vbar .cap {
    height: 5px;
  }

  .vbar .arrow {
    height: 17px;
  }

  .vbar .thumb {
    height: 43px;
  }

  .hbar .cap {
    width: 6px;
  }

  .hbar .arrow {
    width: 17px;
  }

  .hbar .thumb {
    width: 283px;
  }

  .vbar .last {
    margin-top: auto;
  }

  .hbar .last {
    margin-left: auto;
  }

  .corner {
    background: #a3b9de;
  }

  /* target list */
  .targets {
    background: #c0c0c0;
    border-left: 1px solid #696969;
    border-right: 3px solid #696969;
    border-top: 2px solid #808080;
  }

  .targets h2 {
    height: 23px;
    font-size: 17px;
    line-height: 24px;
    text-align: center;
    color: #fff;
    background: #a0a0a0;
  }

  .targets p {
    height: 15px;
    padding-left: 1px;
    font-size: 13px;
    font-weight: bold;
    line-height: 16px;
    background: #fff;
  }

  /* map */
  .centre,
  .right {
    position: relative;
    display: flex;
    flex-direction: column;
    border-left: 1px solid #696969;
  }

  .map {
    position: relative;
    height: 489px;
    overflow: hidden;
    border-right: 1px solid #000;
    border-bottom: 1px solid #000;
  }

  .survey,
  .modes,
  .layers,
  .views,
  .zoom,
  .coils {
    position: absolute;
  }

  .survey {
    top: 138px;
    right: -1px;
    width: 549px;
    height: 198px;
  }

  .survey canvas {
    width: 100%;
    height: 100%;
    image-rendering: pixelated;
  }

  .survey svg {
    position: absolute;
    inset: 0;
  }

  .modes {
    top: 5px;
    left: 15px;
    display: flex;
    gap: 12px;
  }

  .modes button,
  .zoom button {
    width: 33px;
    height: 33px;
    font-family: "Liberation Serif", serif;
    font-size: 17px;
    border-color: #000;
  }

  .modes .on {
    background: #ff0;
  }

  .layers {
    top: 6px;
    left: 166px;
    display: flex;
    font-size: 19px;
  }

  .layers label {
    display: flex;
    align-items: center;
    gap: 6px;
    width: 60px;
  }

  .layers label:first-child {
    width: 70px;
  }

  .views {
    top: 6px;
    right: 11px;
    display: flex;
    flex-direction: column;
    align-items: flex-end;
    font-size: 19px;
  }

  .views label {
    display: flex;
    align-items: center;
    gap: 6px;
    height: 35px;
    padding-right: 6px;
  }

  .views label:nth-child(2) {
    height: 34px;
  }

  .views label:last-child {
    height: 29px;
    margin-top: 3px;
    background: #f0f0f0;
  }

  .views .disabled {
    color: #a0a0a0;
  }

  .views .disabled input {
    background: #f0f0f0;
    border-color: #a0a0a0;
  }

  .zoom {
    top: 265px;
    right: 14px;
    display: flex;
    flex-direction: column;
    gap: 9px;
  }

  .zoom button:last-child {
    margin-top: 3px;
  }

  .coils {
    top: 434px;
    left: 1px;
    display: flex;
    flex-direction: column;
    gap: 7px;
    font-size: 15px;
    line-height: 18px;
  }

  .coils span {
    width: 33px;
    padding-left: 3px;
  }

  .coils .tx {
    background: #fff;
  }

  /* tool strips */
  .toolbar {
    display: flex;
    gap: 2px;
    height: 28px;
    padding: 1px 0 0 2px;
    overflow: hidden;
    background: #b0c4de;
    font-size: 16px;
  }

  .toolbar button {
    flex: none;
    height: 26px;
    background: #fad9d8;
    border-color: #696969;
    white-space: nowrap;
  }

  .grip {
    flex: none;
    width: 2px;
    height: 22px;
    margin: 2px 3px 0 1px;
    background: repeating-linear-gradient(#f4f8ff 0 2px, #8ba0c0 2px 4px);
  }

  .more {
    margin-left: auto;
    padding-right: 3px;
    font-size: 14px;
    line-height: 9px;
    color: #4a6aa0;
  }

  .seam {
    position: relative;
    height: 3px;
    border-top: 1px solid #696969;
    border-bottom: 1px solid #696969;
  }

  .stepper {
    display: flex;
    align-items: center;
    height: 34px;
    padding-left: 2px;
    overflow: hidden;
    white-space: nowrap;
  }

  .steps {
    display: flex;
    flex: none;
    margin: 0 15px 6px 0;
  }

  .steps button {
    width: 33px;
    height: 27px;
    border-color: #a0a0a0;
  }

  .steps button:nth-child(2),
  .steps button:nth-child(3) {
    width: 37px;
  }

  .steps button:first-child,
  .steps button:last-child {
    width: 32px;
  }

  .steps .focus {
    border-width: 2px;
  }

  .stepper input {
    flex: none;
    height: 23px;
    padding-left: 2px;
  }

  .stepper .count {
    width: 50px;
  }

  .stepper .short {
    width: 33px;
    background: #fff;
  }

  .stepper .bold {
    font-weight: bold;
  }

  .stepper label {
    margin: 0 4px;
  }

  .stepper .unit {
    margin-left: 4px;
  }

  .stepper .sen {
    margin: 0 7px 0 17px;
  }

  .stepper .vline {
    margin: 0 6px 0 11px;
  }

  .band {
    height: 9px;
    border-top: 1px solid #696969;
    border-bottom: 1px solid #696969;
  }

  .chart {
    width: 100%;
  }

  .centre .chart,
  .heading,
  .boxed {
    outline: 1px solid #000;
    outline-offset: -1px;
  }

  /* right column */
  .right {
    padding-top: 1px;
  }

  .matching {
    display: flex;
    align-items: center;
    height: 25px;
    padding-left: 13px;
    font-size: 13px;
    color: #6d6d6d;
    background: linear-gradient(90deg, #f0f0f0, #fafafa);
  }

  .matching .select {
    width: 137px;
    height: 22px;
    margin: 2px 4px 0 4px;
  }

  .matching select {
    padding-left: 2px;
    background: #f0f0f0;
  }

  .caret {
    position: absolute;
    right: 3px;
    top: 9px;
    width: 6px;
    height: 4px;
    fill: #555;
  }

  .matching button {
    padding-left: 4px;
    color: #00008b;
    background: none;
    border: 0;
    border-left: 1px solid #c0c0c0;
  }

  .overflow {
    width: 8px;
    height: 8px;
    margin: 14px 4px 0 auto;
  }

  .match-row {
    display: grid;
    grid-template-columns: 79fr 221fr;
    height: 66px;
    overflow: hidden;
  }

  .match-row > svg {
    width: 100%;
    outline: 1px solid #000;
    outline-offset: -1px;
  }

  .radios {
    display: flex;
    flex-direction: column;
    align-items: flex-end;
    padding: 4px 4px 0 0;
    font-size: 13px;
    color: #2f4f4f;
  }

  .radios label {
    display: flex;
    align-items: center;
    gap: 7px;
    height: 20px;
  }

  .radios input {
    appearance: none;
    width: 13px;
    height: 13px;
    background: #fff;
    border: 1px solid #333;
    border-radius: 50%;
  }

  .side-log {
    height: 151px;
  }

  .side-log .scroll {
    width: 19px;
  }

  .side-log i {
    width: 15px;
    height: 34px;
    margin-top: 34px;
    background: #cdcdcd;
  }

  .right .stepper {
    height: 35px;
    padding-left: 3px;
  }

  .right .steps {
    margin-bottom: 4px;
  }

  .right .steps button {
    width: 37px;
  }

  .right .steps button:first-child,
  .right .steps button:last-child {
    width: 32px;
  }

  .pair {
    display: grid;
    grid-template-columns: 139fr 158fr;
    gap: 3px;
  }

  .pair.second {
    grid-template-columns: 146fr 151fr;
  }

  .cell {
    position: relative;
    min-width: 0;
  }

  .cell .handle.tall {
    left: auto;
    right: -9px;
  }
</style>
